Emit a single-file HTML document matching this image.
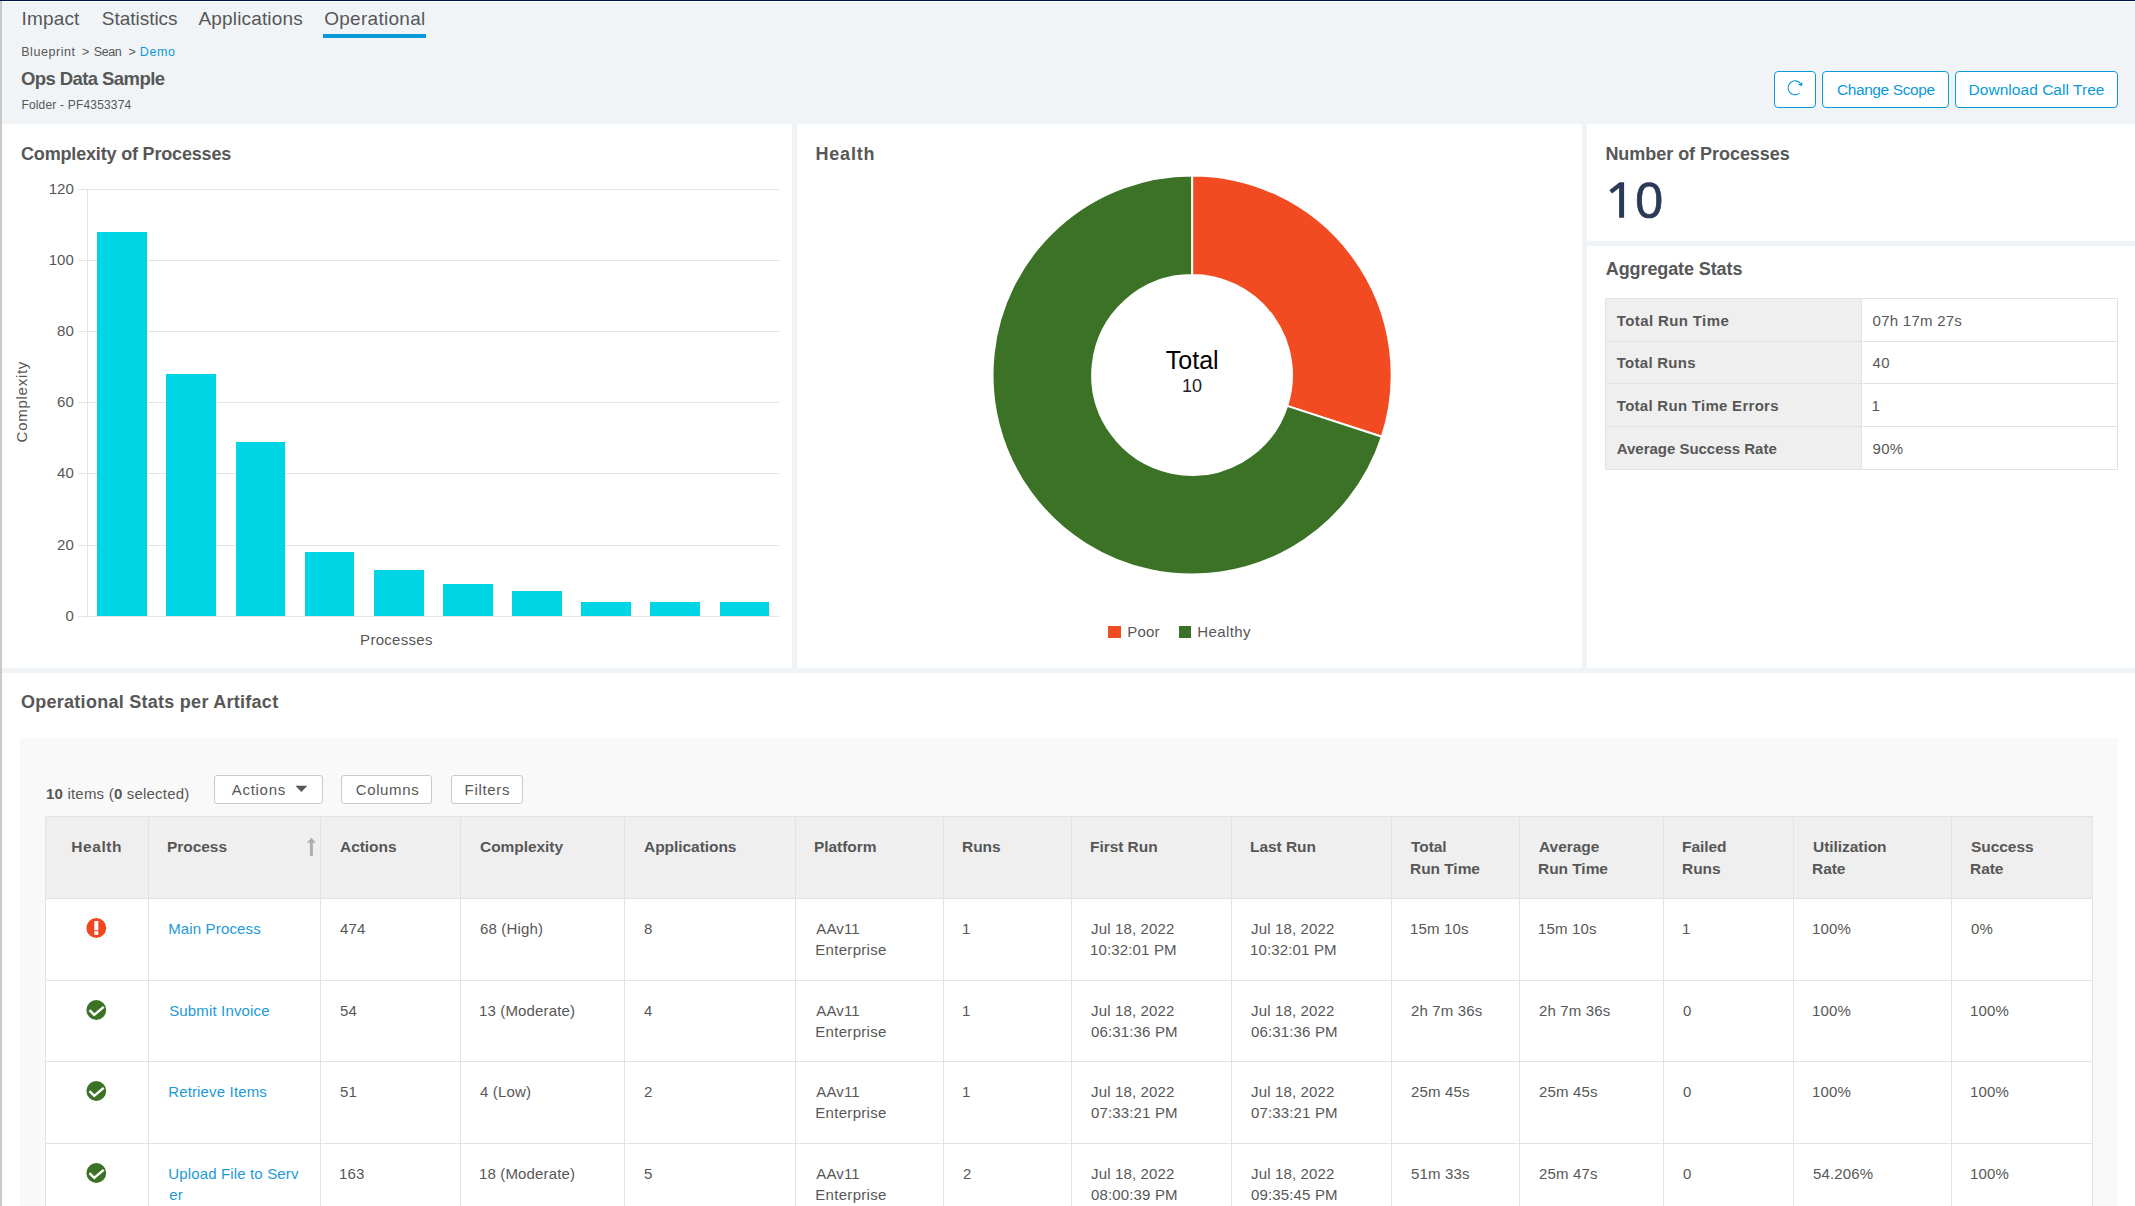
<!DOCTYPE html>
<html><head><meta charset="utf-8"><style>
html,body{margin:0;padding:0;}
body{width:2135px;height:1206px;overflow:hidden;position:relative;background:#fff;font-family:"Liberation Sans", sans-serif;}
body>div,body>svg{position:absolute;box-sizing:content-box;}
b{font-weight:bold}
</style></head><body>
<div style="left:0px;top:0px;width:2135px;height:124px;background:#f0f4f7;"></div>
<div style="left:0px;top:0px;width:2135px;height:1px;background:#05134f;"></div>
<div style="left:2px;top:1px;width:2133px;height:1px;background:#ffffff;"></div>
<div style="left:0px;top:124px;width:2135px;height:1082px;background:#f0f4f7;"></div>
<div style="left:2px;top:124px;width:790px;height:544px;background:#ffffff;"></div>
<div style="left:797px;top:124px;width:785px;height:544px;background:#ffffff;"></div>
<div style="left:1587px;top:124px;width:548px;height:117px;background:#ffffff;"></div>
<div style="left:1587px;top:246px;width:548px;height:422px;background:#ffffff;"></div>
<div style="left:2px;top:673px;width:2133px;height:533px;background:#ffffff;"></div>
<div style="left:0px;top:1px;width:2px;height:1205px;background:#c9c9c9;"></div>
<div style="left:323px;top:34px;width:103px;height:4px;background:#0a9ad9;"></div>
<div style="left:1774px;top:71px;width:40px;height:35px;border:1px solid #0a9ad9;border-radius:4px;background:#fff"></div>
<div style="left:1822px;top:71px;width:125px;height:35px;border:1px solid #0a9ad9;border-radius:4px;background:#fff"></div>
<div style="left:1955px;top:71px;width:161px;height:35px;border:1px solid #0a9ad9;border-radius:4px;background:#fff"></div>
<svg style="left:1785px;top:78px" width="20" height="20" viewBox="0 0 20 20"><path d="M15.43 5.35 A7.0 7.0 0 1 0 14.57 15.21" fill="none" stroke="#0a9ad9" stroke-width="1.05"/><path d="M13.0 6.6 L17.6 4.2 L17.0 8.3 Z" fill="#0a9ad9"/></svg>
<svg style="left:1600px;top:175px" width="30" height="50" viewBox="1600 175 30 50"><path d="M1619.6 182.2 L1624.1 182.2 L1624.1 217.8 L1619.1 217.8 L1619.1 187.9 L1612.1 193.4 L1609.3 190.2 Z" fill="#2b3a56"/></svg>
<div style="left:78px;top:616px;width:701px;height:1px;background:#e4e4e4;"></div>
<div style="left:78px;top:545px;width:701px;height:1px;background:#e4e4e4;"></div>
<div style="left:78px;top:473px;width:701px;height:1px;background:#e4e4e4;"></div>
<div style="left:78px;top:402px;width:701px;height:1px;background:#e4e4e4;"></div>
<div style="left:78px;top:331px;width:701px;height:1px;background:#e4e4e4;"></div>
<div style="left:78px;top:260px;width:701px;height:1px;background:#e4e4e4;"></div>
<div style="left:78px;top:189px;width:701px;height:1px;background:#e4e4e4;"></div>
<div style="left:87px;top:189px;width:1px;height:429px;background:#e4e4e4;"></div>
<div style="left:97.2px;top:231.7px;width:49.8px;height:384.3px;background:#00d5e6;"></div>
<div style="left:166.35px;top:374.04px;width:49.8px;height:241.96px;background:#00d5e6;"></div>
<div style="left:235.5px;top:441.64px;width:49.8px;height:174.36px;background:#00d5e6;"></div>
<div style="left:304.65px;top:551.95px;width:49.8px;height:64.05px;background:#00d5e6;"></div>
<div style="left:373.8px;top:569.74px;width:49.8px;height:46.26px;background:#00d5e6;"></div>
<div style="left:442.95px;top:583.98px;width:49.8px;height:32.02px;background:#00d5e6;"></div>
<div style="left:512.1px;top:591.09px;width:49.8px;height:24.91px;background:#00d5e6;"></div>
<div style="left:581.25px;top:601.77px;width:49.8px;height:14.23px;background:#00d5e6;"></div>
<div style="left:650.4px;top:601.77px;width:49.8px;height:14.23px;background:#00d5e6;"></div>
<div style="left:719.55px;top:601.77px;width:49.8px;height:14.23px;background:#00d5e6;"></div>
<div style="left:21.1px;top:402.2px;width:0;height:0;"><div style="position:absolute;left:0;top:0;transform:translate(-50%,-50%) rotate(-90deg);white-space:nowrap;font-size:15px;line-height:15px;color:#575757;letter-spacing:0.73px;padding-left:0.73px">Complexity</div></div>
<svg style="left:0;top:0" width="2135" height="700"><path d="M1192.10 175.40 A199.6 199.6 0 0 1 1381.93 436.68 L1287.11 405.87 A99.9 99.9 0 0 0 1192.10 275.10 Z" fill="#f24a21" stroke="#fff" stroke-width="2" stroke-linejoin="bevel"/><path d="M1381.93 436.68 A199.6 199.6 0 1 1 1192.10 175.40 L1192.10 275.10 A99.9 99.9 0 1 0 1287.11 405.87 Z" fill="#3b7226" stroke="#fff" stroke-width="2" stroke-linejoin="bevel"/></svg>
<div style="left:1108px;top:626px;width:13px;height:12px;background:#f24a21;"></div>
<div style="left:1179px;top:626px;width:12px;height:12px;background:#3b7226;"></div>
<div style="left:1605px;top:298px;width:256px;height:171px;background:#efefef;"></div>
<div style="left:1605px;top:298px;width:513px;height:1px;background:#e3e3e3;"></div>
<div style="left:1605px;top:341px;width:513px;height:1px;background:#e3e3e3;"></div>
<div style="left:1605px;top:383px;width:513px;height:1px;background:#e3e3e3;"></div>
<div style="left:1605px;top:426px;width:513px;height:1px;background:#e3e3e3;"></div>
<div style="left:1605px;top:469px;width:513px;height:1px;background:#e3e3e3;"></div>
<div style="left:1605px;top:298px;width:1px;height:172px;background:#e3e3e3;"></div>
<div style="left:1861px;top:298px;width:1px;height:172px;background:#e3e3e3;"></div>
<div style="left:2117px;top:298px;width:1px;height:172px;background:#e3e3e3;"></div>
<div style="left:20px;top:738px;width:2098px;height:468px;background:#f9f9f9;"></div>
<div style="left:46px;top:786px;font-size:15px;line-height:15px;color:#575757;white-space:nowrap;letter-spacing:0.2px"><b>10</b> items (<b>0</b> selected)</div>
<div style="left:214px;top:775px;width:107px;height:27px;border:1px solid #c9c9c9;border-radius:3px;background:#fff"></div>
<div style="left:341px;top:775px;width:89px;height:27px;border:1px solid #c9c9c9;border-radius:3px;background:#fff"></div>
<div style="left:451px;top:775px;width:70px;height:27px;border:1px solid #c9c9c9;border-radius:3px;background:#fff"></div>
<svg style="left:295px;top:785px" width="13" height="8" viewBox="0 0 13 8"><path d="M0.5 0.8 L12.3 0.8 L6.4 6.9 Z" fill="#555"/></svg>
<div style="left:45px;top:816px;width:2048px;height:82px;background:#efefef;"></div>
<div style="left:45px;top:898px;width:2048px;height:308px;background:#ffffff;"></div>
<div style="left:45px;top:816px;width:2048px;height:1px;background:#e3e3e3;"></div>
<div style="left:45px;top:898px;width:2048px;height:1px;background:#e3e3e3;"></div>
<div style="left:45px;top:980px;width:2048px;height:1px;background:#e3e3e3;"></div>
<div style="left:45px;top:1061px;width:2048px;height:1px;background:#e3e3e3;"></div>
<div style="left:45px;top:1143px;width:2048px;height:1px;background:#e3e3e3;"></div>
<div style="left:45px;top:816px;width:1px;height:390px;background:#e3e3e3;"></div>
<div style="left:148px;top:816px;width:1px;height:390px;background:#e3e3e3;"></div>
<div style="left:320px;top:816px;width:1px;height:390px;background:#e3e3e3;"></div>
<div style="left:460px;top:816px;width:1px;height:390px;background:#e3e3e3;"></div>
<div style="left:624px;top:816px;width:1px;height:390px;background:#e3e3e3;"></div>
<div style="left:795px;top:816px;width:1px;height:390px;background:#e3e3e3;"></div>
<div style="left:943px;top:816px;width:1px;height:390px;background:#e3e3e3;"></div>
<div style="left:1071px;top:816px;width:1px;height:390px;background:#e3e3e3;"></div>
<div style="left:1231px;top:816px;width:1px;height:390px;background:#e3e3e3;"></div>
<div style="left:1391px;top:816px;width:1px;height:390px;background:#e3e3e3;"></div>
<div style="left:1519px;top:816px;width:1px;height:390px;background:#e3e3e3;"></div>
<div style="left:1663px;top:816px;width:1px;height:390px;background:#e3e3e3;"></div>
<div style="left:1793px;top:816px;width:1px;height:390px;background:#e3e3e3;"></div>
<div style="left:1951px;top:816px;width:1px;height:390px;background:#e3e3e3;"></div>
<div style="left:2092px;top:816px;width:1px;height:390px;background:#e3e3e3;"></div>
<svg style="left:300px;top:830px" width="25" height="30" viewBox="0 0 25 30"><rect x="9.9" y="12.3" width="3" height="13.6" fill="#adadad"/><path d="M7.0 12.8 L11.4 7.8 L15.8 12.8 Z" fill="#adadad"/></svg>
<svg style="left:86px;top:918.0px" width="21" height="21" viewBox="0 0 21 21"><circle cx="10.3" cy="10" r="9.9" fill="#f2461e"/><rect x="8.3" y="3" width="4" height="9.2" fill="#fff"/><rect x="8.3" y="13.2" width="4" height="3.7" fill="#fff"/></svg>
<svg style="left:86px;top:1000.1px" width="21" height="21" viewBox="0 0 21 21"><circle cx="10.3" cy="10" r="9.9" fill="#3b7226"/><path d="M3.5 10.2 L8.2 14.9 L17.7 6.8" fill="none" stroke="#fff" stroke-width="2.4"/></svg>
<svg style="left:86px;top:1081.3px" width="21" height="21" viewBox="0 0 21 21"><circle cx="10.3" cy="10" r="9.9" fill="#3b7226"/><path d="M3.5 10.2 L8.2 14.9 L17.7 6.8" fill="none" stroke="#fff" stroke-width="2.4"/></svg>
<svg style="left:86px;top:1163.1px" width="21" height="21" viewBox="0 0 21 21"><circle cx="10.3" cy="10" r="9.9" fill="#3b7226"/><path d="M3.5 10.2 L8.2 14.9 L17.7 6.8" fill="none" stroke="#fff" stroke-width="2.4"/></svg>
<div style="left:21.60px;top:9px;font-size:19px;line-height:19px;font-weight:normal;color:#575757;letter-spacing:0.152px;white-space:nowrap;">Impact</div>
<div style="left:101.80px;top:9px;font-size:19px;line-height:19px;font-weight:normal;color:#575757;letter-spacing:-0.024px;white-space:nowrap;">Statistics</div>
<div style="left:198.50px;top:9px;font-size:19px;line-height:19px;font-weight:normal;color:#575757;letter-spacing:0.159px;white-space:nowrap;">Applications</div>
<div style="left:324.20px;top:9px;font-size:19px;line-height:19px;font-weight:normal;color:#575757;letter-spacing:0.289px;white-space:nowrap;">Operational</div>
<div style="left:21.20px;top:46px;font-size:12.5px;line-height:12.5px;font-weight:normal;color:#575757;letter-spacing:0.555px;white-space:nowrap;">Blueprint</div>
<div style="left:81.90px;top:46px;font-size:12.5px;line-height:12.5px;font-weight:normal;color:#575757;letter-spacing:0.000px;white-space:nowrap;">&gt;</div>
<div style="left:93.80px;top:46px;font-size:12.5px;line-height:12.5px;font-weight:normal;color:#575757;letter-spacing:-0.447px;white-space:nowrap;">Sean</div>
<div style="left:128.50px;top:46px;font-size:12.5px;line-height:12.5px;font-weight:normal;color:#575757;letter-spacing:0.000px;white-space:nowrap;">&gt;</div>
<div style="left:139.80px;top:46px;font-size:12.5px;line-height:12.5px;font-weight:normal;color:#0b9ad8;letter-spacing:0.603px;white-space:nowrap;">Demo</div>
<div style="left:21.00px;top:70px;font-size:18.5px;line-height:18.5px;font-weight:bold;color:#575757;letter-spacing:-0.584px;white-space:nowrap;">Ops Data Sample</div>
<div style="left:21.40px;top:99px;font-size:12px;line-height:12px;font-weight:normal;color:#575757;letter-spacing:0.185px;white-space:nowrap;">Folder - PF4353374</div>
<div style="left:1836.90px;top:82px;font-size:15.5px;line-height:15.5px;font-weight:normal;color:#0b9ad8;letter-spacing:-0.394px;white-space:nowrap;">Change Scope</div>
<div style="left:1968.60px;top:82px;font-size:15.5px;line-height:15.5px;font-weight:normal;color:#0b9ad8;letter-spacing:0.034px;white-space:nowrap;">Download Call Tree</div>
<div style="left:21.00px;top:145px;font-size:18px;line-height:18px;font-weight:bold;color:#575757;letter-spacing:-0.172px;white-space:nowrap;">Complexity of Processes</div>
<div style="left:815.50px;top:145px;font-size:18px;line-height:18px;font-weight:bold;color:#575757;letter-spacing:0.797px;white-space:nowrap;">Health</div>
<div style="left:1605.40px;top:145px;font-size:18px;line-height:18px;font-weight:bold;color:#575757;letter-spacing:-0.037px;white-space:nowrap;">Number of Processes</div>
<div style="left:1635.30px;top:176px;font-size:50px;line-height:50px;font-weight:normal;color:#2b3a56;letter-spacing:0.000px;white-space:nowrap;-webkit-text-stroke:0.7px #2b3a56;">0</div>
<div style="left:1605.80px;top:260px;font-size:18px;line-height:18px;font-weight:bold;color:#575757;letter-spacing:-0.102px;white-space:nowrap;">Aggregate Stats</div>
<div style="left:65.40px;top:608px;font-size:15px;line-height:15px;font-weight:normal;color:#575757;letter-spacing:0.000px;white-space:nowrap;">0</div>
<div style="left:57.06px;top:537px;font-size:15px;line-height:15px;font-weight:normal;color:#575757;letter-spacing:0.000px;white-space:nowrap;">20</div>
<div style="left:57.06px;top:465px;font-size:15px;line-height:15px;font-weight:normal;color:#575757;letter-spacing:0.000px;white-space:nowrap;">40</div>
<div style="left:57.06px;top:394px;font-size:15px;line-height:15px;font-weight:normal;color:#575757;letter-spacing:0.000px;white-space:nowrap;">60</div>
<div style="left:57.06px;top:323px;font-size:15px;line-height:15px;font-weight:normal;color:#575757;letter-spacing:0.000px;white-space:nowrap;">80</div>
<div style="left:48.72px;top:252px;font-size:15px;line-height:15px;font-weight:normal;color:#575757;letter-spacing:0.000px;white-space:nowrap;">100</div>
<div style="left:48.72px;top:181px;font-size:15px;line-height:15px;font-weight:normal;color:#575757;letter-spacing:0.000px;white-space:nowrap;">120</div>
<div style="left:360.10px;top:632px;font-size:15px;line-height:15px;font-weight:normal;color:#575757;letter-spacing:0.297px;white-space:nowrap;">Processes</div>
<div style="left:1165.87px;top:348px;font-size:25px;line-height:25px;font-weight:normal;color:#000;letter-spacing:0.000px;white-space:nowrap;">Total</div>
<div style="left:1181.99px;top:377px;font-size:18px;line-height:18px;font-weight:normal;color:#222;letter-spacing:0.000px;white-space:nowrap;">10</div>
<div style="left:1127.20px;top:624px;font-size:15px;line-height:15px;font-weight:normal;color:#575757;letter-spacing:0.204px;white-space:nowrap;">Poor</div>
<div style="left:1197.30px;top:624px;font-size:15px;line-height:15px;font-weight:normal;color:#575757;letter-spacing:0.390px;white-space:nowrap;">Healthy</div>
<div style="left:1616.80px;top:313px;font-size:15px;line-height:15px;font-weight:bold;color:#575757;letter-spacing:0.384px;white-space:nowrap;">Total Run Time</div>
<div style="left:1872.60px;top:313px;font-size:15px;line-height:15px;font-weight:normal;color:#575757;letter-spacing:0.250px;white-space:nowrap;">07h 17m 27s</div>
<div style="left:1616.80px;top:355px;font-size:15px;line-height:15px;font-weight:bold;color:#575757;letter-spacing:0.262px;white-space:nowrap;">Total Runs</div>
<div style="left:1872.60px;top:355px;font-size:15px;line-height:15px;font-weight:normal;color:#575757;letter-spacing:0.250px;white-space:nowrap;">40</div>
<div style="left:1616.80px;top:398px;font-size:15px;line-height:15px;font-weight:bold;color:#575757;letter-spacing:0.280px;white-space:nowrap;">Total Run Time Errors</div>
<div style="left:1871.60px;top:398px;font-size:15px;line-height:15px;font-weight:normal;color:#575757;letter-spacing:0.250px;white-space:nowrap;">1</div>
<div style="left:1616.80px;top:441px;font-size:15px;line-height:15px;font-weight:bold;color:#575757;letter-spacing:-0.023px;white-space:nowrap;">Average Success Rate</div>
<div style="left:1872.60px;top:441px;font-size:15px;line-height:15px;font-weight:normal;color:#575757;letter-spacing:0.250px;white-space:nowrap;">90%</div>
<div style="left:21.00px;top:693px;font-size:18px;line-height:18px;font-weight:bold;color:#575757;letter-spacing:0.267px;white-space:nowrap;">Operational Stats per Artifact</div>
<div style="left:231.80px;top:782px;font-size:15px;line-height:15px;font-weight:normal;color:#575757;letter-spacing:0.702px;white-space:nowrap;">Actions</div>
<div style="left:355.70px;top:782px;font-size:15px;line-height:15px;font-weight:normal;color:#575757;letter-spacing:0.635px;white-space:nowrap;">Columns</div>
<div style="left:464.60px;top:782px;font-size:15px;line-height:15px;font-weight:normal;color:#575757;letter-spacing:0.661px;white-space:nowrap;">Filters</div>
<div style="left:71.20px;top:839px;font-size:15.5px;line-height:15.5px;font-weight:bold;color:#575757;letter-spacing:0.600px;white-space:nowrap;">Health</div>
<div style="left:167.00px;top:839px;font-size:15.5px;line-height:15.5px;font-weight:bold;color:#575757;letter-spacing:-0.050px;white-space:nowrap;">Process</div>
<div style="left:340.00px;top:839px;font-size:15.5px;line-height:15.5px;font-weight:bold;color:#575757;letter-spacing:-0.050px;white-space:nowrap;">Actions</div>
<div style="left:480.00px;top:839px;font-size:15.5px;line-height:15.5px;font-weight:bold;color:#575757;letter-spacing:-0.050px;white-space:nowrap;">Complexity</div>
<div style="left:644.00px;top:839px;font-size:15.5px;line-height:15.5px;font-weight:bold;color:#575757;letter-spacing:-0.050px;white-space:nowrap;">Applications</div>
<div style="left:814.00px;top:839px;font-size:15.5px;line-height:15.5px;font-weight:bold;color:#575757;letter-spacing:-0.050px;white-space:nowrap;">Platform</div>
<div style="left:962.00px;top:839px;font-size:15.5px;line-height:15.5px;font-weight:bold;color:#575757;letter-spacing:-0.050px;white-space:nowrap;">Runs</div>
<div style="left:1090.00px;top:839px;font-size:15.5px;line-height:15.5px;font-weight:bold;color:#575757;letter-spacing:-0.050px;white-space:nowrap;">First Run</div>
<div style="left:1250.00px;top:839px;font-size:15.5px;line-height:15.5px;font-weight:bold;color:#575757;letter-spacing:-0.050px;white-space:nowrap;">Last Run</div>
<div style="left:1411.00px;top:839px;font-size:15.5px;line-height:15.5px;font-weight:bold;color:#575757;letter-spacing:-0.050px;white-space:nowrap;">Total</div>
<div style="left:1410.00px;top:861px;font-size:15.5px;line-height:15.5px;font-weight:bold;color:#575757;letter-spacing:-0.050px;white-space:nowrap;">Run Time</div>
<div style="left:1539.00px;top:839px;font-size:15.5px;line-height:15.5px;font-weight:bold;color:#575757;letter-spacing:-0.050px;white-space:nowrap;">Average</div>
<div style="left:1538.00px;top:861px;font-size:15.5px;line-height:15.5px;font-weight:bold;color:#575757;letter-spacing:-0.050px;white-space:nowrap;">Run Time</div>
<div style="left:1682.00px;top:839px;font-size:15.5px;line-height:15.5px;font-weight:bold;color:#575757;letter-spacing:-0.050px;white-space:nowrap;">Failed</div>
<div style="left:1682.00px;top:861px;font-size:15.5px;line-height:15.5px;font-weight:bold;color:#575757;letter-spacing:-0.050px;white-space:nowrap;">Runs</div>
<div style="left:1813.00px;top:839px;font-size:15.5px;line-height:15.5px;font-weight:bold;color:#575757;letter-spacing:-0.050px;white-space:nowrap;">Utilization</div>
<div style="left:1812.00px;top:861px;font-size:15.5px;line-height:15.5px;font-weight:bold;color:#575757;letter-spacing:-0.050px;white-space:nowrap;">Rate</div>
<div style="left:1971.00px;top:839px;font-size:15.5px;line-height:15.5px;font-weight:bold;color:#575757;letter-spacing:-0.050px;white-space:nowrap;">Success</div>
<div style="left:1970.00px;top:861px;font-size:15.5px;line-height:15.5px;font-weight:bold;color:#575757;letter-spacing:-0.050px;white-space:nowrap;">Rate</div>
<div style="left:168.20px;top:921px;font-size:15px;line-height:15px;font-weight:normal;color:#1b9ad6;letter-spacing:0.150px;white-space:nowrap;">Main Process</div>
<div style="left:340.00px;top:921px;font-size:15px;line-height:15px;font-weight:normal;color:#575757;letter-spacing:0.150px;white-space:nowrap;">474</div>
<div style="left:480.00px;top:921px;font-size:15px;line-height:15px;font-weight:normal;color:#575757;letter-spacing:0.150px;white-space:nowrap;">68 (High)</div>
<div style="left:644.00px;top:921px;font-size:15px;line-height:15px;font-weight:normal;color:#575757;letter-spacing:0.150px;white-space:nowrap;">8</div>
<div style="left:816.30px;top:921px;font-size:15px;line-height:15px;font-weight:normal;color:#575757;letter-spacing:0.150px;white-space:nowrap;">AAv11</div>
<div style="left:815.30px;top:942px;font-size:15px;line-height:15px;font-weight:normal;color:#575757;letter-spacing:0.300px;white-space:nowrap;">Enterprise</div>
<div style="left:962.00px;top:921px;font-size:15px;line-height:15px;font-weight:normal;color:#575757;letter-spacing:0.150px;white-space:nowrap;">1</div>
<div style="left:1091.00px;top:921px;font-size:15px;line-height:15px;font-weight:normal;color:#575757;letter-spacing:0.150px;white-space:nowrap;">Jul 18, 2022</div>
<div style="left:1090.00px;top:942px;font-size:15px;line-height:15px;font-weight:normal;color:#575757;letter-spacing:0.150px;white-space:nowrap;">10:32:01 PM</div>
<div style="left:1251.00px;top:921px;font-size:15px;line-height:15px;font-weight:normal;color:#575757;letter-spacing:0.150px;white-space:nowrap;">Jul 18, 2022</div>
<div style="left:1250.00px;top:942px;font-size:15px;line-height:15px;font-weight:normal;color:#575757;letter-spacing:0.150px;white-space:nowrap;">10:32:01 PM</div>
<div style="left:1410.00px;top:921px;font-size:15px;line-height:15px;font-weight:normal;color:#575757;letter-spacing:0.150px;white-space:nowrap;">15m 10s</div>
<div style="left:1538.00px;top:921px;font-size:15px;line-height:15px;font-weight:normal;color:#575757;letter-spacing:0.150px;white-space:nowrap;">15m 10s</div>
<div style="left:1682.00px;top:921px;font-size:15px;line-height:15px;font-weight:normal;color:#575757;letter-spacing:0.150px;white-space:nowrap;">1</div>
<div style="left:1812.00px;top:921px;font-size:15px;line-height:15px;font-weight:normal;color:#575757;letter-spacing:0.150px;white-space:nowrap;">100%</div>
<div style="left:1971.00px;top:921px;font-size:15px;line-height:15px;font-weight:normal;color:#575757;letter-spacing:0.150px;white-space:nowrap;">0%</div>
<div style="left:169.20px;top:1003px;font-size:15px;line-height:15px;font-weight:normal;color:#1b9ad6;letter-spacing:0.150px;white-space:nowrap;">Submit Invoice</div>
<div style="left:340.00px;top:1003px;font-size:15px;line-height:15px;font-weight:normal;color:#575757;letter-spacing:0.150px;white-space:nowrap;">54</div>
<div style="left:479.00px;top:1003px;font-size:15px;line-height:15px;font-weight:normal;color:#575757;letter-spacing:0.150px;white-space:nowrap;">13 (Moderate)</div>
<div style="left:644.00px;top:1003px;font-size:15px;line-height:15px;font-weight:normal;color:#575757;letter-spacing:0.150px;white-space:nowrap;">4</div>
<div style="left:816.30px;top:1003px;font-size:15px;line-height:15px;font-weight:normal;color:#575757;letter-spacing:0.150px;white-space:nowrap;">AAv11</div>
<div style="left:815.30px;top:1024px;font-size:15px;line-height:15px;font-weight:normal;color:#575757;letter-spacing:0.300px;white-space:nowrap;">Enterprise</div>
<div style="left:962.00px;top:1003px;font-size:15px;line-height:15px;font-weight:normal;color:#575757;letter-spacing:0.150px;white-space:nowrap;">1</div>
<div style="left:1091.00px;top:1003px;font-size:15px;line-height:15px;font-weight:normal;color:#575757;letter-spacing:0.150px;white-space:nowrap;">Jul 18, 2022</div>
<div style="left:1091.00px;top:1024px;font-size:15px;line-height:15px;font-weight:normal;color:#575757;letter-spacing:0.150px;white-space:nowrap;">06:31:36 PM</div>
<div style="left:1251.00px;top:1003px;font-size:15px;line-height:15px;font-weight:normal;color:#575757;letter-spacing:0.150px;white-space:nowrap;">Jul 18, 2022</div>
<div style="left:1251.00px;top:1024px;font-size:15px;line-height:15px;font-weight:normal;color:#575757;letter-spacing:0.150px;white-space:nowrap;">06:31:36 PM</div>
<div style="left:1411.00px;top:1003px;font-size:15px;line-height:15px;font-weight:normal;color:#575757;letter-spacing:0.150px;white-space:nowrap;">2h 7m 36s</div>
<div style="left:1539.00px;top:1003px;font-size:15px;line-height:15px;font-weight:normal;color:#575757;letter-spacing:0.150px;white-space:nowrap;">2h 7m 36s</div>
<div style="left:1683.00px;top:1003px;font-size:15px;line-height:15px;font-weight:normal;color:#575757;letter-spacing:0.150px;white-space:nowrap;">0</div>
<div style="left:1812.00px;top:1003px;font-size:15px;line-height:15px;font-weight:normal;color:#575757;letter-spacing:0.150px;white-space:nowrap;">100%</div>
<div style="left:1970.00px;top:1003px;font-size:15px;line-height:15px;font-weight:normal;color:#575757;letter-spacing:0.150px;white-space:nowrap;">100%</div>
<div style="left:168.20px;top:1084px;font-size:15px;line-height:15px;font-weight:normal;color:#1b9ad6;letter-spacing:0.150px;white-space:nowrap;">Retrieve Items</div>
<div style="left:340.00px;top:1084px;font-size:15px;line-height:15px;font-weight:normal;color:#575757;letter-spacing:0.150px;white-space:nowrap;">51</div>
<div style="left:480.00px;top:1084px;font-size:15px;line-height:15px;font-weight:normal;color:#575757;letter-spacing:0.150px;white-space:nowrap;">4 (Low)</div>
<div style="left:644.00px;top:1084px;font-size:15px;line-height:15px;font-weight:normal;color:#575757;letter-spacing:0.150px;white-space:nowrap;">2</div>
<div style="left:816.30px;top:1084px;font-size:15px;line-height:15px;font-weight:normal;color:#575757;letter-spacing:0.150px;white-space:nowrap;">AAv11</div>
<div style="left:815.30px;top:1105px;font-size:15px;line-height:15px;font-weight:normal;color:#575757;letter-spacing:0.300px;white-space:nowrap;">Enterprise</div>
<div style="left:962.00px;top:1084px;font-size:15px;line-height:15px;font-weight:normal;color:#575757;letter-spacing:0.150px;white-space:nowrap;">1</div>
<div style="left:1091.00px;top:1084px;font-size:15px;line-height:15px;font-weight:normal;color:#575757;letter-spacing:0.150px;white-space:nowrap;">Jul 18, 2022</div>
<div style="left:1091.00px;top:1105px;font-size:15px;line-height:15px;font-weight:normal;color:#575757;letter-spacing:0.150px;white-space:nowrap;">07:33:21 PM</div>
<div style="left:1251.00px;top:1084px;font-size:15px;line-height:15px;font-weight:normal;color:#575757;letter-spacing:0.150px;white-space:nowrap;">Jul 18, 2022</div>
<div style="left:1251.00px;top:1105px;font-size:15px;line-height:15px;font-weight:normal;color:#575757;letter-spacing:0.150px;white-space:nowrap;">07:33:21 PM</div>
<div style="left:1411.00px;top:1084px;font-size:15px;line-height:15px;font-weight:normal;color:#575757;letter-spacing:0.150px;white-space:nowrap;">25m 45s</div>
<div style="left:1539.00px;top:1084px;font-size:15px;line-height:15px;font-weight:normal;color:#575757;letter-spacing:0.150px;white-space:nowrap;">25m 45s</div>
<div style="left:1683.00px;top:1084px;font-size:15px;line-height:15px;font-weight:normal;color:#575757;letter-spacing:0.150px;white-space:nowrap;">0</div>
<div style="left:1812.00px;top:1084px;font-size:15px;line-height:15px;font-weight:normal;color:#575757;letter-spacing:0.150px;white-space:nowrap;">100%</div>
<div style="left:1970.00px;top:1084px;font-size:15px;line-height:15px;font-weight:normal;color:#575757;letter-spacing:0.150px;white-space:nowrap;">100%</div>
<div style="left:168.20px;top:1166px;font-size:15px;line-height:15px;font-weight:normal;color:#1b9ad6;letter-spacing:0.150px;white-space:nowrap;">Upload File to Serv</div>
<div style="left:169.20px;top:1187px;font-size:15px;line-height:15px;font-weight:normal;color:#1b9ad6;letter-spacing:0.150px;white-space:nowrap;">er</div>
<div style="left:339.00px;top:1166px;font-size:15px;line-height:15px;font-weight:normal;color:#575757;letter-spacing:0.150px;white-space:nowrap;">163</div>
<div style="left:479.00px;top:1166px;font-size:15px;line-height:15px;font-weight:normal;color:#575757;letter-spacing:0.150px;white-space:nowrap;">18 (Moderate)</div>
<div style="left:644.00px;top:1166px;font-size:15px;line-height:15px;font-weight:normal;color:#575757;letter-spacing:0.150px;white-space:nowrap;">5</div>
<div style="left:816.30px;top:1166px;font-size:15px;line-height:15px;font-weight:normal;color:#575757;letter-spacing:0.150px;white-space:nowrap;">AAv11</div>
<div style="left:815.30px;top:1187px;font-size:15px;line-height:15px;font-weight:normal;color:#575757;letter-spacing:0.300px;white-space:nowrap;">Enterprise</div>
<div style="left:963.00px;top:1166px;font-size:15px;line-height:15px;font-weight:normal;color:#575757;letter-spacing:0.150px;white-space:nowrap;">2</div>
<div style="left:1091.00px;top:1166px;font-size:15px;line-height:15px;font-weight:normal;color:#575757;letter-spacing:0.150px;white-space:nowrap;">Jul 18, 2022</div>
<div style="left:1091.00px;top:1187px;font-size:15px;line-height:15px;font-weight:normal;color:#575757;letter-spacing:0.150px;white-space:nowrap;">08:00:39 PM</div>
<div style="left:1251.00px;top:1166px;font-size:15px;line-height:15px;font-weight:normal;color:#575757;letter-spacing:0.150px;white-space:nowrap;">Jul 18, 2022</div>
<div style="left:1251.00px;top:1187px;font-size:15px;line-height:15px;font-weight:normal;color:#575757;letter-spacing:0.150px;white-space:nowrap;">09:35:45 PM</div>
<div style="left:1411.00px;top:1166px;font-size:15px;line-height:15px;font-weight:normal;color:#575757;letter-spacing:0.150px;white-space:nowrap;">51m 33s</div>
<div style="left:1539.00px;top:1166px;font-size:15px;line-height:15px;font-weight:normal;color:#575757;letter-spacing:0.150px;white-space:nowrap;">25m 47s</div>
<div style="left:1683.00px;top:1166px;font-size:15px;line-height:15px;font-weight:normal;color:#575757;letter-spacing:0.150px;white-space:nowrap;">0</div>
<div style="left:1813.00px;top:1166px;font-size:15px;line-height:15px;font-weight:normal;color:#575757;letter-spacing:0.150px;white-space:nowrap;">54.206%</div>
<div style="left:1970.00px;top:1166px;font-size:15px;line-height:15px;font-weight:normal;color:#575757;letter-spacing:0.150px;white-space:nowrap;">100%</div>
</body></html>
